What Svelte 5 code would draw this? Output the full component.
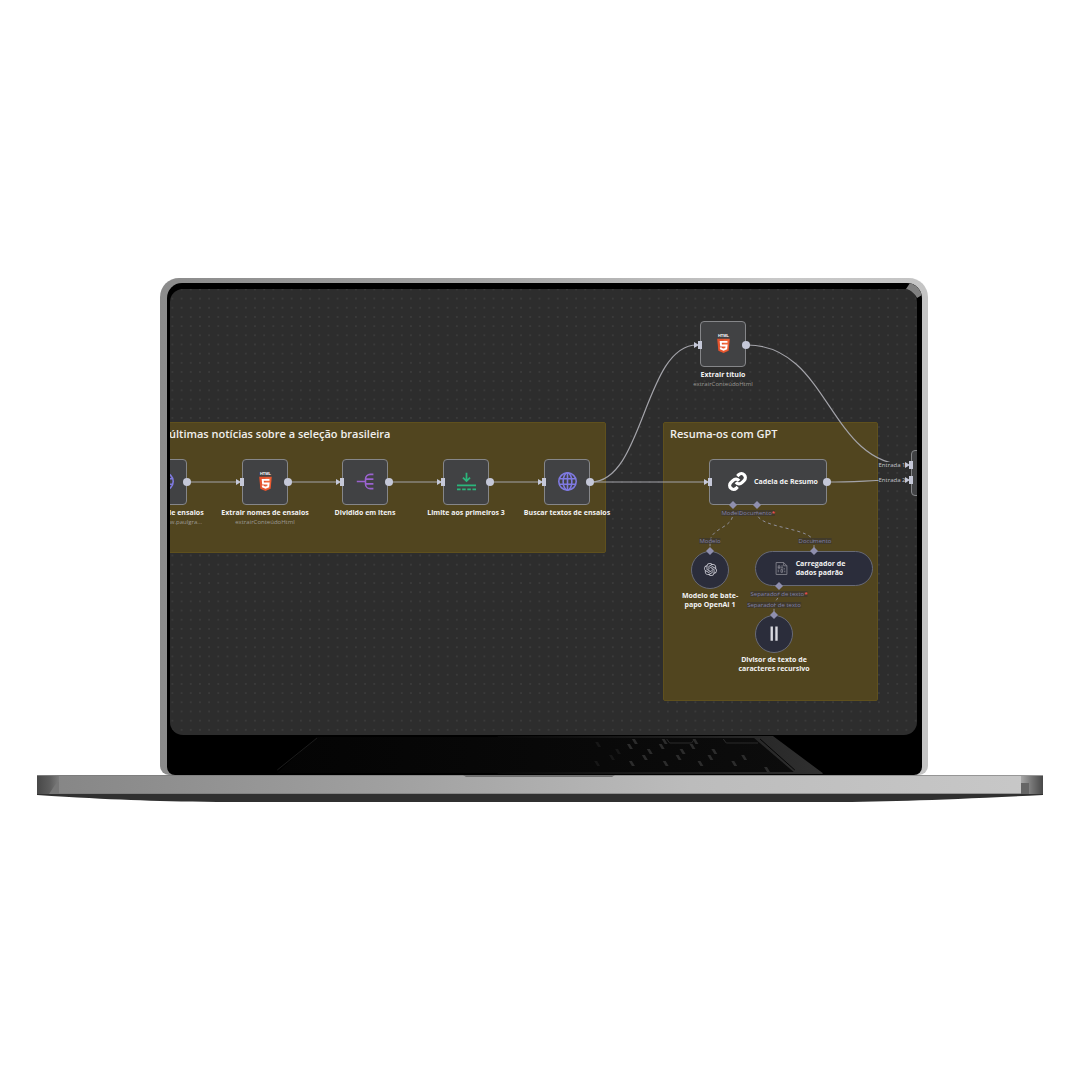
<script>
  const tiles = [
    { x: -29, y: 170, icon: 'globe', label: 'Buscar lista de ensaios', sub: 'GET: https://www.paulgra...' },
    { x: 72, y: 170, icon: 'html', label: 'Extrair nomes de ensaios', sub: 'extrairConteúdoHtml' },
    { x: 172, y: 170, icon: 'split', label: 'Dividido em itens' },
    { x: 273, y: 170, icon: 'limit', label: 'Limite aos primeiros 3' },
    { x: 374, y: 170, icon: 'globe', label: 'Buscar textos de ensaios' },
    { x: 530, y: 32, icon: 'html', label: 'Extrair título', sub: 'extrairConteúdoHtml' }
  ];

  const circles = [
    { x: 521, y: 262, icon: 'openai', lines: ['Modelo de bate-', 'papo OpenAI 1'] },
    { x: 585, y: 326, icon: 'bars', lines: ['Divisor de texto de', 'caracteres recursivo'] }
  ];

  const ports = [
    { x: 562, y: 224, text: 'Modelo' },
    { x: 587, y: 224, text: 'Documento', required: true },
    { x: 540, y: 252, text: 'Modelo' },
    { x: 645, y: 252, text: 'Documento' },
    { x: 609, y: 305, text: 'Separador de texto', required: true },
    { x: 604, y: 316, text: 'Separador de texto' },
    { x: 722, y: 176, text: 'Entrada 1', bright: true },
    { x: 722, y: 191, text: 'Entrada 2', bright: true }
  ];

  const wires = [
    'M17 193H68', 'M118 193H169', 'M219 193H270', 'M320 193H371', 'M421 193H536',
    'M421 193C474 193 474 56 527 56',
    'M577 56C659 56 659 176 738 176',
    'M657 193C690 193 700 191 738 191'
  ];
  const dashes = [
    'M563 216V224C563 240 540 238 540 254V262',
    'M587 216V224C587 240 644 238 644 254V262',
    'M609 297V303C609 312 604 310 604 318V326'
  ];
  const outputs = [[17, 193], [118, 193], [219, 193], [320, 193], [420, 193], [576, 56], [657, 193]];
  const inputs = [[72, 193], [172, 193], [273, 193], [374, 193], [530, 56], [540, 193], [741, 176], [741, 191]];
  const diamonds = [[563, 216], [587, 216], [540, 262], [644, 262], [609, 297], [604, 326]];

  const keys = [
    [430, 7], [467, 4], [462, 9], [497, 4], [494, 9], [528, 4], [525, 9],
    [450, 14], [482, 14], [515, 14], [547, 14],
    [444, 20], [477, 20], [511, 20], [543, 20], [577, 20],
    [429, 26], [464, 26], [498, 26], [533, 26], [567, 26], [600, 32]
  ];
</script>

{#snippet icon(name)}
  {#if name === 'html'}
    <svg class="icon" viewBox="0 0 24 24" aria-hidden="true">
      <text x="12" y="4" class="mark">HTML</text>
      <path fill="#e5532d" d="M4 6h16l-1.500 15L12 24l-6.500-3z" />
      <path fill="#f0673a" d="M12 7h7l-1.300 13.200L12 22.500z" />
      <path fill="none" stroke="#fff" stroke-width="2.400" d="M17 10H8.500l.400 4.500h7l-.500 4L12 19.800l-3.300-1.300-.200-1.500" />
    </svg>
  {:else if name === 'split'}
    <svg class="icon" viewBox="0 0 24 24" fill="none" stroke="#9a62cf" stroke-width="2" aria-hidden="true">
      <path d="M1 12h10M22 3h-4a6 6 0 0 0-6 6v6a6 6 0 0 0 6 6h4M13 9h9M13 15h9" />
    </svg>
  {:else if name === 'limit'}
    <svg class="icon" viewBox="0 0 24 24" fill="none" stroke="#2bb67b" stroke-width="2.200" aria-hidden="true">
      <path d="M12 1v10M7.500 7l4.500 4.500L16.500 7M0 17h24" /><path stroke-dasharray="4.500 2" d="M0 22h24" />
    </svg>
  {:else if name === 'globe'}
    <svg class="icon" viewBox="0 0 24 24" fill="none" stroke="#7f7ae2" stroke-width="2" aria-hidden="true">
      <circle cx="12" cy="12" r="11" /><ellipse cx="12" cy="12" rx="5.500" ry="11" />
      <path d="M12 1v22M1.500 8.500h21M1.500 15.500h21" />
    </svg>
  {:else if name === 'link'}
    <svg class="icon" viewBox="0 0 24 24" fill="none" stroke="#fff" stroke-width="4" aria-hidden="true">
      <path d="M10 13a5 5 0 0 0 7.540.540l3-3a5 5 0 0 0-7.070-7.070l-1.720 1.710" />
      <path d="M14 11a5 5 0 0 0-7.540-.540l-3 3a5 5 0 0 0 7.070 7.070l1.710-1.710" />
    </svg>
  {:else if name === 'openai'}
    <svg class="icon small" viewBox="0 0 24 24" fill="#c9c9d2" aria-hidden="true">
      <path d="M22.2819 9.8211a5.9847 5.9847 0 0 0-.5157-4.9108 6.0462 6.0462 0 0 0-6.5098-2.9A6.0651 6.0651 0 0 0 4.9807 4.1818a5.9847 5.9847 0 0 0-3.9977 2.9 6.0462 6.0462 0 0 0 .7427 7.0966 5.98 5.98 0 0 0 .511 4.9107 6.051 6.051 0 0 0 6.5146 2.9001A5.9847 5.9847 0 0 0 13.2599 24a6.0557 6.0557 0 0 0 5.7718-4.2058 5.9894 5.9894 0 0 0 3.9977-2.9001 6.0557 6.0557 0 0 0-.7475-7.0729zm-9.022 12.6081a4.4755 4.4755 0 0 1-2.8764-1.0408l.1419-.0804 4.7783-2.7582a.7948.7948 0 0 0 .3927-.6813v-6.7369l2.02 1.1686a.071.071 0 0 1 .038.052v5.5826a4.504 4.504 0 0 1-4.4945 4.4944zm-9.6607-4.1254a4.4708 4.4708 0 0 1-.5346-3.0137l.142.0852 4.783 2.7582a.7712.7712 0 0 0 .7806 0l5.8428-3.3685v2.3324a.0804.0804 0 0 1-.0332.0615L9.74 19.9502a4.4992 4.4992 0 0 1-6.1408-1.6464zM2.3408 7.8956a4.485 4.485 0 0 1 2.3655-1.9728V11.6a.7664.7664 0 0 0 .3879.6765l5.8144 3.3543-2.0201 1.1685a.0757.0757 0 0 1-.071 0l-4.8303-2.7865A4.504 4.504 0 0 1 2.3408 7.872zm16.5963 3.8558L13.1038 8.364 15.1192 7.2a.0757.0757 0 0 1 .071 0l4.8303 2.7913a4.4944 4.4944 0 0 1-.6765 8.1042v-5.6772a.79.79 0 0 0-.407-.667zm2.0107-3.0231l-.142-.0852-4.7735-2.7818a.7759.7759 0 0 0-.7854 0L9.409 9.2297V6.8974a.0662.0662 0 0 1 .0284-.0615l4.8303-2.7866a4.4992 4.4992 0 0 1 6.6802 4.66zM8.3065 12.863l-2.02-1.1638a.0804.0804 0 0 1-.038-.0567V6.0742a4.4992 4.4992 0 0 1 7.3757-3.4537l-.142.0805L8.704 5.459a.7948.7948 0 0 0-.3927.6813zm1.0976-2.3654l2.602-1.4998 2.6069 1.4998v2.9994l-2.5974 1.4997-2.6067-1.4997Z" />
    </svg>
  {:else if name === 'file'}
    <svg class="icon small" viewBox="0 0 24 24" fill="none" stroke="#85858f" stroke-width="1.600" aria-hidden="true">
      <path d="M2 1h14l6 6v16H2zM16 1v6h6" />
      <path d="M6 7h3v4H6zM13 6v5M6 14v5M11 14h3v5h-3zM17 11v3M18 16v3M5 11h5M11 11h4" />
    </svg>
  {:else}
    <svg class="icon" viewBox="0 0 24 24" fill="#d9d9e0" aria-hidden="true">
      <path d="M7 3h3v18H7zM13 3h3v18h-3z" />
    </svg>
  {/if}
{/snippet}

<main>
  <div class="laptop">
    <div class="lid">
      <div class="bezel">
        <section class="canvas" aria-label="Fluxo de trabalho">
          <svg class="layer" aria-hidden="true">
            <defs>
              <pattern id="dots" x="7" y="5" width="9.175" height="9.175" patternUnits="userSpaceOnUse">
                <circle cx="4.600" cy="4.600" r="0.700" fill="#4c4c4c" />
              </pattern>
            </defs>
            <rect width="100%" height="100%" fill="url(#dots)" />
          </svg>

          <section class="note news"><h2>últimas notícias sobre a seleção brasileira</h2></section>
          <section class="note gpt"><h2>Resuma-os com GPT</h2></section>

          <svg class="layer" aria-hidden="true">
            <g fill="none" stroke="#a3a3a9" stroke-width="1.200">
              {#each wires as d}<path {d} />{/each}
            </g>
            <g fill="none" stroke="#908f9a" stroke-dasharray="3 3">
              {#each dashes as d}<path {d} />{/each}
            </g>
          </svg>

          {#each tiles as t}
            <article class="node" style:left="{t.x}px" style:top="{t.y}px">
              <div class="tile">{@render icon(t.icon)}</div>
              <h3>{t.label}</h3>
              {#if t.sub}<p>{t.sub}</p>{/if}
            </article>
          {/each}

          <article class="chain">{@render icon('link')}<h3>Cadeia de Resumo</h3></article>
          <article class="merge" aria-label="Mesclar"></article>
          <article class="loader">{@render icon('file')}<h3>Carregador de<br />dados padrão</h3></article>

          {#each circles as c}
            <article class="node round" style:left="{c.x}px" style:top="{c.y}px">
              <div class="disc">{@render icon(c.icon)}</div>
              <h3>{c.lines[0]}<br />{c.lines[1]}</h3>
            </article>
          {/each}

          {#each ports as p}
            <span class="port" class:bright={p.bright} style:left="{p.x}px" style:top="{p.y}px">{p.text}{#if p.required}<b>*</b>{/if}</span>
          {/each}

          <svg class="layer" aria-hidden="true">
            <g fill="#c5c8d8">
              {#each outputs as [x, y]}<circle cx={x} cy={y} r="4" />{/each}
              {#each inputs as [x, y]}
                <path d="M{x - 6} {y - 3}l5 3l-5 3z" /><rect x={x - 2} y={y - 4} width="4" height="8" />
              {/each}
            </g>
            <g fill="#8f8fae">
              {#each diamonds as [x, y]}<path d="M{x} {y - 4}l4 4l-4 4l-4-4z" />{/each}
            </g>
          </svg>
        </section>

        <svg class="reflection" viewBox="0 0 752 40" preserveAspectRatio="none" aria-hidden="true">
          <defs>
            <linearGradient id="deck" x1="0" x2="1"><stop offset="0" stop-color="#040404" /><stop offset=".5" stop-color="#080808" /><stop offset="1" stop-color="#0c0c0c" /></linearGradient>
            <linearGradient id="edge" x1="0" x2="1"><stop offset="0" stop-color="#080808" /><stop offset="1" stop-color="#303030" /></linearGradient>
          </defs>
          <path fill="url(#deck)" d="M148 2H590L630 38H108z" />
          <path stroke="#1c1c1c" d="M108 35L148 3" />
          <path fill="url(#edge)" d="M330 1H607L657 38V39H330V37H628L588 3H330z" />
          <path fill="none" stroke="#2b2b2b" d="M500 4l3 4h22l3-4M557 4l3 4h32" />
          <path fill="none" stroke="#060606" d="M594 4L629 35" />
          {#each keys as [x, y]}<path fill={x < 460 ? '#171717' : '#2c2c2c'} d="M{x - 2} {y}h3l3 5h-3z" />{/each}
        </svg>
        <svg class="glint" viewBox="0 0 16 16" aria-hidden="true">
          <path fill="#808080" d="M4 0C10 2 14 6 16 12L11 15C9 11 5 7 0 6z" />
        </svg>
      </div>
    </div>

    <svg class="base" viewBox="0 0 1006 28" preserveAspectRatio="none" aria-hidden="true">
      <defs>
        <linearGradient id="metal" x1="0" x2="1"><stop offset="0" stop-color="#858585" /><stop offset=".35" stop-color="#a0a0a0" /><stop offset=".65" stop-color="#bcbcbc" /><stop offset="1" stop-color="#c8c8c8" /></linearGradient>
        <linearGradient id="capLeft" x1="0" x2="1"><stop offset="0" stop-color="#484848" /><stop offset=".6" stop-color="#5e5e5e" /><stop offset="1" stop-color="#7c7c7c" /></linearGradient>
        <linearGradient id="capRight" x1="0" x2="1"><stop offset="0" stop-color="#a8a8a8" /><stop offset=".5" stop-color="#747474" /><stop offset="1" stop-color="#484848" /></linearGradient>
      </defs>
      <path fill="#303030" d="M0 18H1006V20C900 25 850 27 780 27H180C110 26 80 25 0 20z" />
      <path fill="url(#metal)" d="M0 0H1006V19H0z" />
      <path fill="#777" d="M0 0H1006V1H0zM22 18H984V19H22z" opacity=".6" />
      <path fill="url(#capLeft)" d="M0 1H22V19H0z" />
      <path fill="#777" d="M12 19L20 7H22V19z" />
      <path fill="url(#capRight)" d="M984 1H1006V19H984z" />
      <path fill="#666" d="M984 8H992V19H984z" />
      <path fill="#6f6f6f" d="M426 0H578L575 2H429z" />
    </svg>
  </div>
</main>

<style>
  :global(body) { margin: 0; background: #fff; }
  main {
    min-height: 100vh;
    box-sizing: border-box;
    padding: 0 37px;
    display: flex;
    align-items: center;
    justify-content: center;
    font-family: "Open Sans", "Noto Sans", sans-serif;
  }
  .laptop { width: 100%; max-width: 1006px; }
  .lid {
    margin: 0 115px 0 123px;
    padding: 5px 6px 0 7px;
    border-radius: 19px 19px 9px 9px;
    background: linear-gradient(90deg, #8b8b8b, #a4a4a4 40%, #c8c8c8 80%, #c4c4c4);
  }
  .bezel {
    position: relative;
    padding: 6px 5px 0 3px;
    background: #000;
    border-radius: 15px 15px 8px 8px;
    overflow: hidden;
  }
  .canvas {
    position: relative;
    min-height: 446px;
    background: #2d2d2d;
    border-radius: 13px;
    overflow: hidden;
  }
  .reflection { display: block; width: 100%; height: 40px; }
  .glint { position: absolute; top: 0; right: 0; width: 16px; height: 16px; }
  .base { display: block; width: 100%; height: 28px; }
  .layer { position: absolute; inset: 0; width: 100%; height: 100%; pointer-events: none; }
  h2, h3, p { margin: 0; }
  h2 { font-size: 11px; line-height: 14px; font-weight: 600; color: #f0efec; white-space: nowrap; }
  h3 { font-size: 7px; line-height: 9px; font-weight: 700; color: #f2f2f2; white-space: nowrap; }
  p { font-size: 6px; line-height: 10px; color: #9d9a94; white-space: nowrap; }
  .note {
    position: absolute;
    top: 133px;
    box-sizing: border-box;
    padding: 4px 6px;
    background: #51451f;
    border: 1px solid #5f501d;
    border-radius: 2px;
  }
  .news { left: -8px; width: 444px; height: 131px; }
  .gpt { left: 493px; width: 215px; height: 279px; }
  .node {
    position: absolute;
    width: 46px;
    display: flex;
    flex-direction: column;
    align-items: center;
    text-align: center;
  }
  .round { width: 38px; }
  .tile, .disc, .chain, .loader, .merge {
    box-sizing: border-box;
    display: flex;
    align-items: center;
    justify-content: center;
    background: #414244;
    border: 1px solid #858689;
    border-radius: 4px;
  }
  .tile { width: 46px; height: 46px; margin-bottom: 3px; }
  .disc { width: 38px; height: 38px; margin-bottom: 2px; }
  .disc, .loader { background: #2b2d3b; border-color: #686a76; border-radius: 50%; }
  .chain, .loader, .merge { position: absolute; }
  .chain { left: 539px; top: 170px; width: 118px; height: 46px; gap: 7px; padding-left: 10px; }
  .loader { left: 585px; top: 262px; width: 118px; height: 35px; gap: 8px; padding-right: 8px; border-radius: 18px; }
  .merge { left: 741px; top: 161px; width: 46px; height: 46px; }
  .icon { width: 19px; height: 19px; flex: none; overflow: visible; }
  .small { width: 13px; height: 13px; }
  .mark { font-family: "Liberation Sans", sans-serif; font-size: 5px; font-weight: 700; fill: #fff; text-anchor: middle; }
  .port {
    position: absolute;
    transform: translate(-50%, -50%);
    font-size: 6px;
    line-height: 6px;
    color: #8080a8;
    background: #37343299;
    white-space: nowrap;
  }
  .port b { color: #f05050; }
  .bright { color: #c4c4cc; background: #2d2d2d; }
</style>
